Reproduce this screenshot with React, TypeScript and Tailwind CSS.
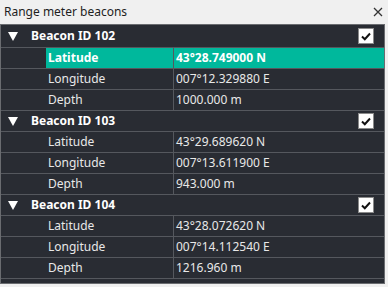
import { Fragment } from "react";

type Prop = { label: string; value: string };
type Beacon = { id: number; props: Prop[] };

const beacons: Beacon[] = [
  {
    id: 102,
    props: [
      { label: "Latitude", value: "43°28.749000 N" },
      { label: "Longitude", value: "007°12.329880 E" },
      { label: "Depth", value: "1000.000 m" },
    ],
  },
  {
    id: 103,
    props: [
      { label: "Latitude", value: "43°29.689620 N" },
      { label: "Longitude", value: "007°13.611900 E" },
      { label: "Depth", value: "943.000 m" },
    ],
  },
  {
    id: 104,
    props: [
      { label: "Latitude", value: "43°28.072620 N" },
      { label: "Longitude", value: "007°14.112540 E" },
      { label: "Depth", value: "1216.960 m" },
    ],
  },
];

function Checkbox() {
  return (
    <div className="flex h-[16px] w-[16px] items-center justify-center border border-[#8a8a8a] bg-white">
      <svg width="10" height="9" viewBox="0 0 10 9">
        <path d="M1 4.5 L3.8 7.2 L9 1.5" fill="none" stroke="#111" strokeWidth="2" />
      </svg>
    </div>
  );
}

export default function App() {
  return (
    <div
      className="flex h-[287px] w-[388px] flex-col bg-[#f0f0f0] text-[12px]"
      style={{ fontFamily: '"Noto Sans", "Open Sans", sans-serif' }}
    >
      <div className="flex h-[24px] items-center justify-between pl-[4px] pr-[4px] text-[#1e1e1e]">
        <span>Range meter beacons</span>
        <svg width="10" height="10" viewBox="0 0 10 10" className="mr-[1px]">
          <path d="M1 1 L9 9 M9 1 L1 9" stroke="#333" strokeWidth="1.3" />
        </svg>
      </div>

      <div className="mb-[3px] mr-[3px] flex-1 border border-[#6a6c70] bg-[#292c33]">
        {beacons.map((b, i) => (
          <Fragment key={b.id}>
            <div
              className={`flex items-center border-b border-[#55585e] pr-[10px] ${
                i === 0 ? "h-[23px]" : "h-[21px]"
              }`}
            >
              <svg width="10" height="9" viewBox="0 0 10 9" className="ml-[7px]">
                <path d="M0 0 L10 0 L5 9 Z" fill="#ffffff" />
              </svg>
              <span className="ml-[13px] flex-1 font-bold text-white">Beacon ID {b.id}</span>
              <Checkbox />
            </div>
            {b.props.map((p, j) => {
              const active = i === 0 && j === 0;
              return (
                <div key={p.label} className="flex h-[21px] border-b border-[#55585e]">
                  <div className="w-[45px]" />
                  <div
                    className={`flex flex-1 ${active ? "bg-[#00b89c] font-bold text-white" : "text-[#e8e8e8]"}`}
                  >
                    <div className="flex w-[128px] items-center border-r border-[#55585e] pl-[2px]">
                      {p.label}
                    </div>
                    <div className="flex flex-1 items-center pl-[2px]">{p.value}</div>
                  </div>
                </div>
              );
            })}
          </Fragment>
        ))}
      </div>
    </div>
  );
}
